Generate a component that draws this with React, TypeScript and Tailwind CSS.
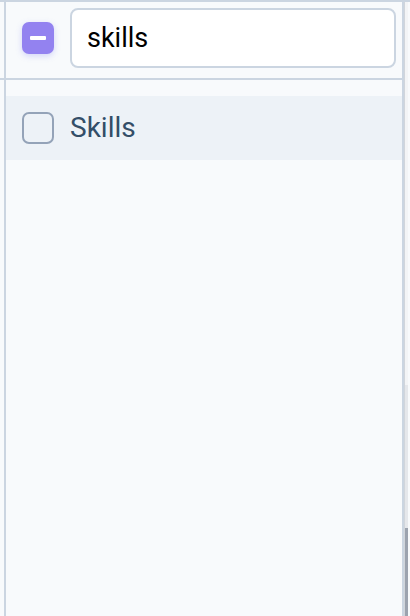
import React from "react";

export default function App() {
  return (
    <div
      className="flex h-[616px] w-[410px] overflow-hidden bg-[#f8fafc] border-t-2 border-[#cbd5e1]"
      style={{ fontFamily: "Roboto, 'Liberation Sans', sans-serif" }}
    >
      {/* left strip */}
      <div className="flex w-[4px] flex-col">
        <div className="h-[76px]" />
        <div className="h-[2px] bg-[#cbd5e1]" />
      </div>
      {/* panel */}
      <div className="flex w-[400px] flex-col border-x-2 border-[#cbd5e1] bg-[#f8fafc]">
        <div className="flex h-[78px] items-center gap-4 border-b-2 border-[#cbd5e1] pb-[4px] pl-[16px] pr-[6px]">
          <div className="flex h-[32px] w-[32px] shrink-0 items-center justify-center rounded-[7px] bg-[#9382f0] shadow-[0_2px_6px_rgba(99,102,241,0.25)]">
            <div className="h-[4px] w-[16px] rounded-[1px] bg-white" />
          </div>
          <div className="flex h-[60px] flex-1 items-center rounded-[8px] border-2 border-[#cbd5e1] bg-white pl-[15px] text-[27px] text-black">
            skills
          </div>
        </div>
        <div className="h-[16px]" />
        <div className="flex h-[64px] items-center gap-4 bg-[#edf2f7] pl-[16px]">
          <div className="h-[32px] w-[32px] shrink-0 rounded-[7px] border-2 border-[#94a3b8] bg-[#edf2f7]" />
          <span className="text-[28px] text-[#334e68]">Skills</span>
        </div>
      </div>
      {/* right strip */}
      <div className="flex w-[4px] flex-col border-l border-[#d1d5db]">
        <div className="h-[383px] bg-[#f3f4f6]" />
        <div className="h-[143px] bg-[#e5e7eb]" />
        <div className="flex-1 bg-[#9ca3af]" />
      </div>
    </div>
  );
}
